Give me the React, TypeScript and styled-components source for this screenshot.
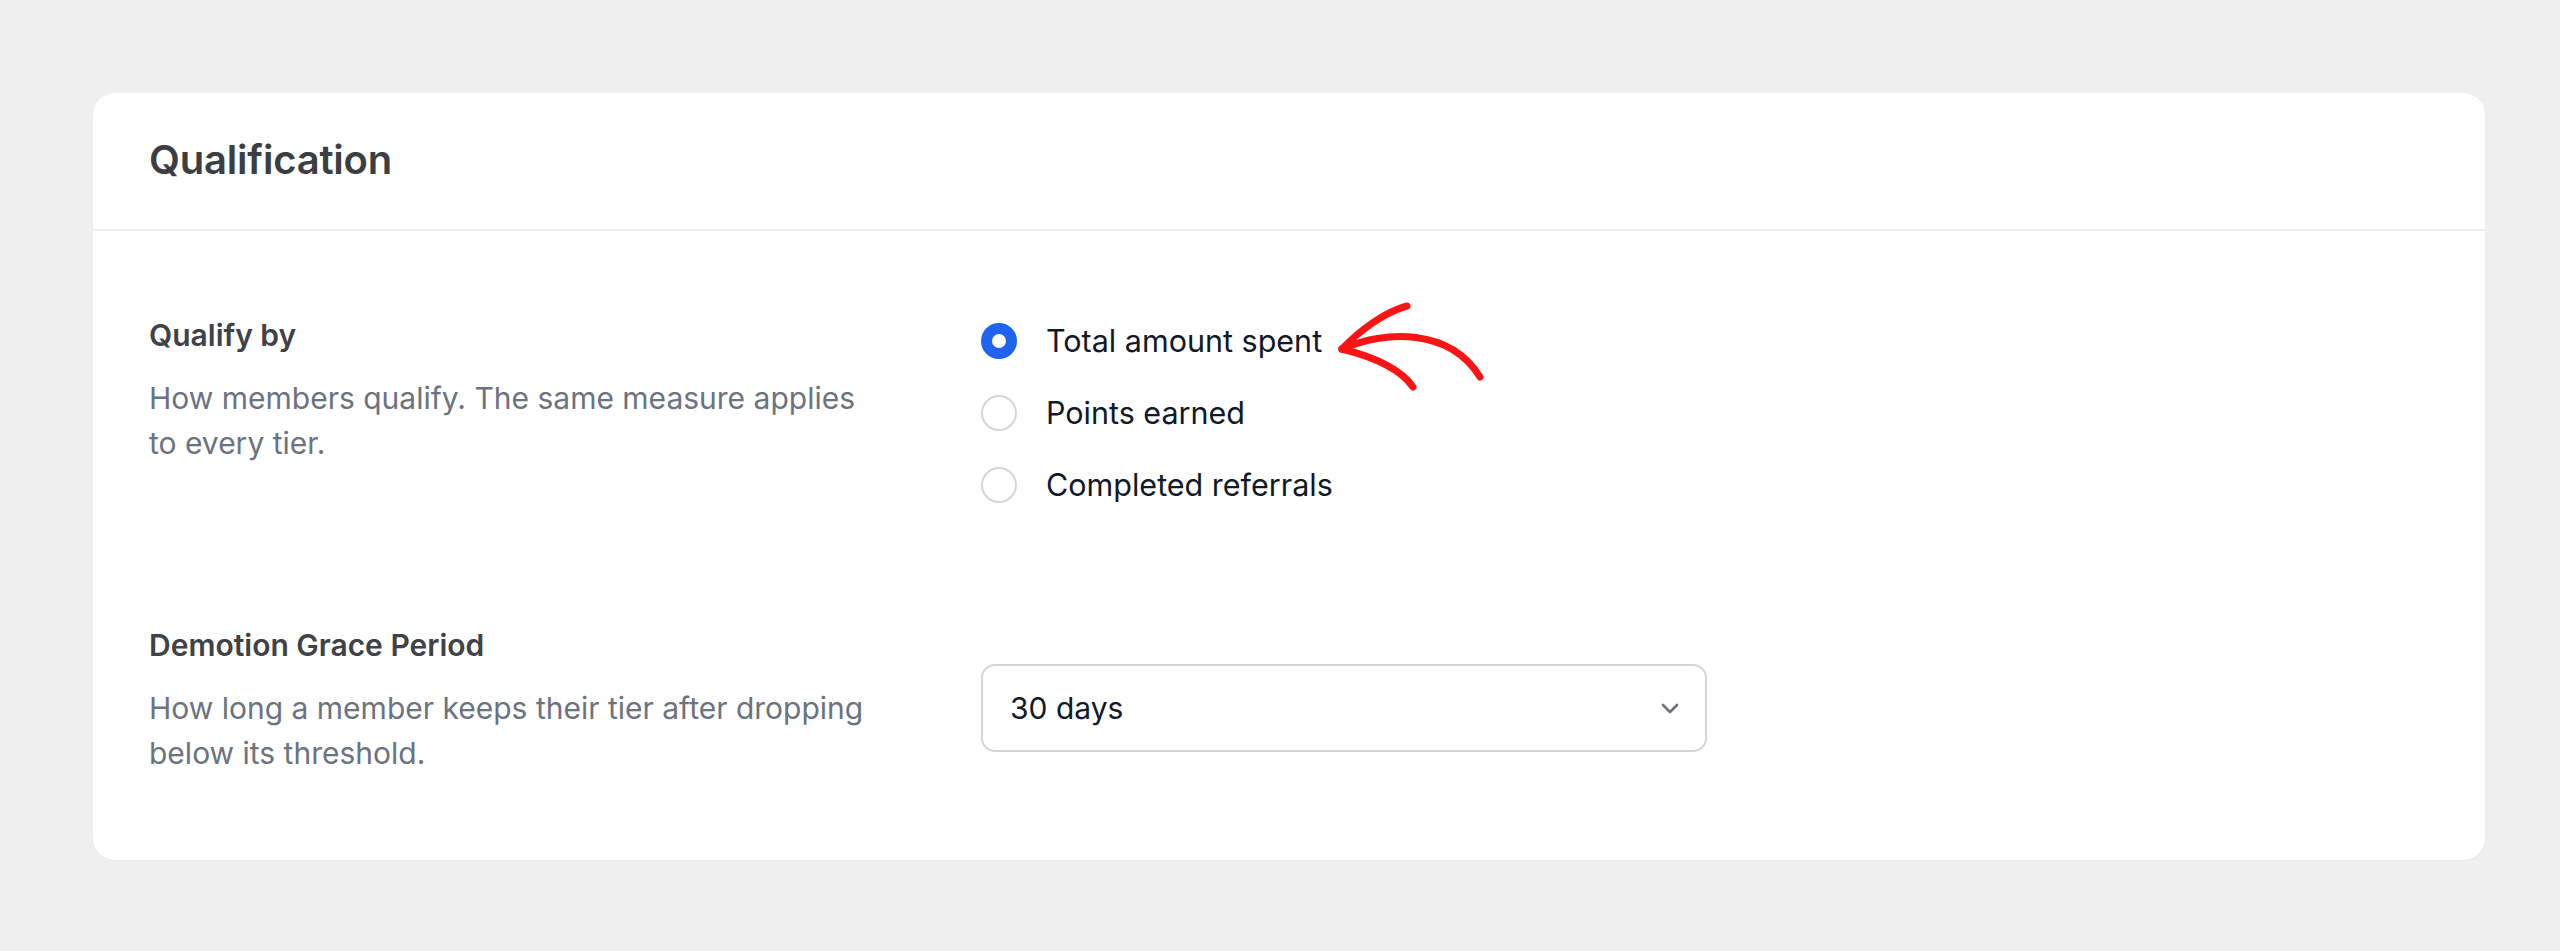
import styled, { createGlobalStyle } from 'styled-components'
import { useState } from 'react'

const GlobalStyle = createGlobalStyle`
  html, body {
    margin: 0;
    padding: 0;
    background: #efefef;
  }
  body {
    font-family: Inter, "Noto Sans", "Liberation Sans", sans-serif;
    -webkit-font-smoothing: antialiased;
  }
`

const options = ['Total amount spent', 'Points earned', 'Completed referrals']

const App = () => {
  // 선택된 기준
  const [qualifyBy, setQualifyBy] = useState<string>(options[0])

  return (
    <Page>
      <GlobalStyle />
      <Card>
        <Header>
          <Title>Qualification</Title>
        </Header>
        <Body>
          <Row>
            <Info>
              <Label>Qualify by</Label>
              <Description>How members qualify. The same measure applies to every tier.</Description>
            </Info>
            <Control $offset={5}>
              <RadioGroup>
                {options.map((option) => (
                  <Option key={option} onClick={() => setQualifyBy(option)}>
                    <Radio $checked={qualifyBy === option} />
                    <OptionText>{option}</OptionText>
                  </Option>
                ))}
              </RadioGroup>
            </Control>
          </Row>
          <Row>
            <Info>
              <Label>Demotion Grace Period</Label>
              <Description>How long a member keeps their tier after dropping below its threshold.</Description>
            </Info>
            <Control $offset={41}>
              <Select>
                <SelectValue>30 days</SelectValue>
                <svg width="18" height="11" viewBox="0 0 18 11" fill="none">
                  <path d="M2 2l7 7 7-7" stroke="#6b7280" strokeWidth="2.6" strokeLinecap="round" strokeLinejoin="round" />
                </svg>
              </Select>
            </Control>
          </Row>
        </Body>
        {/* 손으로 그린 화살표 주석 */}
        <Annotation width="170" height="110" viewBox="1330 290 170 110" fill="none">
          <path
            d="M1342 349 C1385 330 1450 328 1480 377"
            stroke="#fa1414"
            strokeWidth="7"
            strokeLinecap="round"
          />
          <path d="M1342 349 C1360 330 1385 312 1407 306" stroke="#fa1414" strokeWidth="7" strokeLinecap="round" />
          <path d="M1342 349 C1370 356 1400 368 1413 387" stroke="#fa1414" strokeWidth="7" strokeLinecap="round" />
        </Annotation>
      </Card>
    </Page>
  )
}

export default App

const Page = styled.div`
  padding: 93px 75px 93px 93px;
`
const Card = styled.div`
  position: relative;
  background: #fff;
  border-radius: 22px;
  box-shadow: 0 1px 2px rgba(0, 0, 0, 0.03);
`
const Header = styled.div`
  padding: 43px 56px 45px;
  border-bottom: 2px solid #ededed;
`
const Title = styled.h2`
  margin: 0;
  font-size: 40px;
  line-height: 48px;
  font-weight: 600;
  color: #3b3e43;
  letter-spacing: -0.2px;
`
const Body = styled.div`
  display: flex;
  flex-direction: column;
  gap: 116px;
  padding: 82px 56px 84px;
`
const Row = styled.div`
  display: grid;
  grid-template-columns: 725px 1fr;
  column-gap: 107px;
  align-items: start;
`
const Info = styled.div`
  display: flex;
  flex-direction: column;
  gap: 18px;
`
const Label = styled.div`
  font-size: 30px;
  line-height: 45px;
  font-weight: 600;
  color: #3f4246;
`
const Description = styled.p`
  margin: 0;
  font-size: 30px;
  line-height: 45px;
  color: #6b7280;
`
const Control = styled.div<{ $offset: number }>`
  padding-top: ${(p) => p.$offset}px;
`
const RadioGroup = styled.div`
  display: flex;
  flex-direction: column;
  gap: 27px;
`
const Option = styled.label`
  display: flex;
  align-items: center;
  gap: 29px;
  cursor: pointer;
`
const Radio = styled.span<{ $checked: boolean }>`
  box-sizing: border-box;
  width: 36px;
  height: 36px;
  border-radius: 50%;
  flex-shrink: 0;
  background: #fff;
  border: ${(p) => (p.$checked ? '11.5px solid #1f63ef' : '2.5px solid #d6d6d6')};
`
const OptionText = styled.span`
  font-size: 30.5px;
  line-height: 45px;
  color: #111827;
`
const Select = styled.div`
  box-sizing: border-box;
  display: flex;
  align-items: center;
  justify-content: space-between;
  width: 726px;
  height: 88px;
  padding: 0 26px 0 27px;
  border: 2px solid #d4d6da;
  border-radius: 14px;
  background: #fff;
  cursor: pointer;
`
const SelectValue = styled.span`
  font-size: 30px;
  line-height: 45px;
  color: #111827;
`
const Annotation = styled.svg`
  position: absolute;
  left: 1237px;
  top: 197px;
  pointer-events: none;
`
